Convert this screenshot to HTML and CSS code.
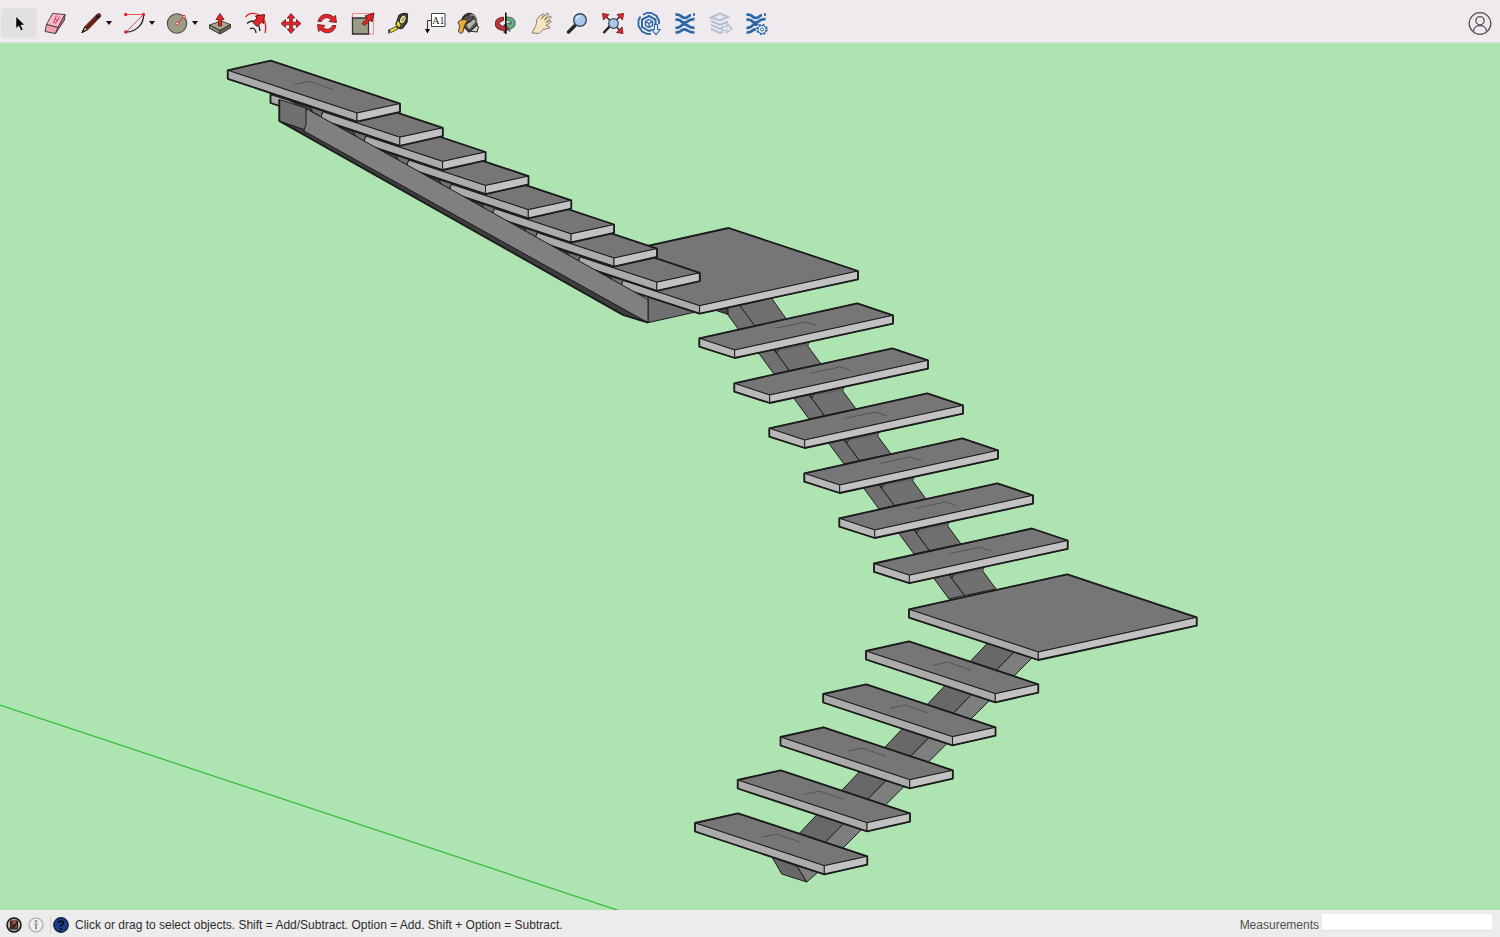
FILE: index.html
```html
<!DOCTYPE html>
<html lang="en">
<head>
  <meta charset="UTF-8">
  <meta name="viewport" content="width=device-width, initial-scale=1.0">
  <title>Stairs</title>
  <link rel="stylesheet" href="styles.css">
</head>
<body>
  <header class="toolbar">
    <button class="tool selected" aria-label="Select">
      <svg class="icon" viewBox="0 0 24 24"><path d="M9 5.500v12l2.800-2.600 2.200 4.800 2-.9-2.100-4.700h3.800z" fill="#000" stroke="#fff" stroke-width=".5"/></svg>
    </button>
    <button class="tool" aria-label="Eraser">
      <svg class="icon" viewBox="0 0 24 24" stroke="#444" stroke-linejoin="round">
        <path d="M9.500 2.500 22 3.500 15 16.500 3.500 13.500z" fill="#ffb5c4"/>
        <path d="M3.500 13.500 15 16.500 12.500 22.500 2 20.500z" fill="#f5a0b2"/>
        <path d="M22 3.500 21.500 9 12.500 22.500 15 16.500z" fill="#cf7186"/>
        <path d="M13.500 4.500 10.500 11.500 13 12 16.500 5.500M12 8.500l3 .8" fill="none" stroke="#a64a63"/>
      </svg>
    </button>
    <button class="tool tool-menu" aria-label="Line">
      <svg class="icon" viewBox="0 0 24 24" stroke="#1b1b1b" stroke-linejoin="round">
        <path d="M3 21.500 6 15.500 18.500 3 Q21 1.500 22 5 L9 18.500z" fill="#a5291f"/>
        <path d="M7.500 17 20 4.500" stroke="#4b1411" stroke-width="1.500"/>
        <path d="M3 21.500 5.700 16 8.500 18.500z" fill="#d8b486"/>
        <path d="M3 21.500 4.300 19 5.500 20z" fill="#000"/>
        <path d="M17 4.500 20.500 7" stroke-width="2"/>
      </svg>
      <span class="caret"></span>
    </button>
    <button class="tool tool-menu" aria-label="Arc">
      <svg class="icon" viewBox="0 0 24 24" fill="none">
        <path d="M21.500 4C22 13 14 21 4 21" stroke="#222" stroke-width="1.300"/>
        <path d="M4 3.500H21.500L4 21" stroke="#e8505a"/>
        <g fill="#e3262b"><circle cx="3.700" cy="3.500" r="1.700"/><circle cx="21.500" cy="3.500" r="1.700"/><circle cx="3.700" cy="21" r="1.700"/></g>
      </svg>
      <span class="caret"></span>
    </button>
    <button class="tool tool-menu" aria-label="Shapes">
      <svg class="icon" viewBox="0 0 24 24">
        <circle cx="12" cy="12.500" r="9.700" fill="#9b9c85" stroke="#4b4b42" stroke-width="1.100"/>
        <path d="M12.300 12.500 19 5.500" stroke="#e3262b"/>
        <g fill="#fff" stroke="#e3262b"><circle cx="12.300" cy="12.500" r="1.500"/><circle cx="19" cy="5.500" r="1.300"/></g>
      </svg>
      <span class="caret"></span>
    </button>

    <div class="tool-group">
      <button class="tool" aria-label="Push/Pull">
        <svg class="icon" viewBox="0 0 24 24" stroke="#30322a" stroke-width=".9" stroke-linejoin="round">
          <path d="M1.500 14 13 10 22.500 13.500 12 19.500z" fill="#a6a78c"/>
          <path d="M1.500 14 12 19.500V23L1.500 17.500z" fill="#868870"/>
          <path d="M22.500 13.500V17L12 23V19.500z" fill="#63654f"/>
          <path d="M10.500 15V8.500H8L12 2.500 16 8.500H13.500V15z" fill="#e3262b" stroke="#7e1515"/>
        </svg>
      </button>
      <button class="tool" aria-label="Offset">
        <svg class="icon" viewBox="0 0 24 24" fill="none">
          <path d="M1.500 6C5 1.500 12 1 17 5.500 22 10 22.500 16 21 22" stroke="#e3262b" stroke-width="1.400"/>
          <path d="M3 12.500c4-4 9-3 11.500 1.500 1 2 1.500 4 1 6M6 18c3-2 6 0 6 4" stroke="#222" stroke-width="1.300"/>
          <path d="M9 11.500 13 7 11.500 5 20.500 3.500 19.500 12.500 17.500 11 13 15.500z" fill="#e3262b" stroke="#6f1111" stroke-linejoin="round"/>
        </svg>
      </button>
      <button class="tool" aria-label="Move">
        <svg class="icon" viewBox="0 0 24 24"><path d="M12 2.500 15.800 7H13.300V11.200H17.500V8.500L22 12.500 17.500 16.500V13.800H13.300V18H15.800L12 22.500 8.200 18H10.700V13.800H6.500V16.500L2 12.500 6.500 8.500V11.200H10.700V7H8.200z" fill="#e3262b" stroke="#6b1515" stroke-width=".8" stroke-linejoin="round"/></svg>
      </button>
      <button class="tool" aria-label="Rotate">
        <svg class="icon" viewBox="0 0 24 24" fill="#e3262b" stroke="#6b1515" stroke-width=".8" stroke-linejoin="round">
          <path id="turn" d="M3 10.500C4.500 3 13 1 18.500 6L20.500 4.500 21.500 11.500 14 10.500 16 8.500C12.500 5.500 8 6.500 6.500 10.500z"/>
          <use href="#turn" transform="rotate(180 12 12.500)"/>
        </svg>
      </button>
      <button class="tool" aria-label="Scale">
        <svg class="icon" viewBox="0 0 24 24">
          <path d="M1.500 2.500H22.500V23H1.500z" fill="none" stroke="#ef8c8c"/>
          <path d="M1.500 7H17.500V23H1.500z" fill="#9b9c85" stroke="#333" stroke-width="1.300"/>
          <path d="M11 12.500 16.500 7.200 14 5 23 2 21 11 19 9 13.500 14.500z" fill="#e3262b" stroke="#5d1111" stroke-width=".9" stroke-linejoin="round"/>
        </svg>
      </button>
      <button class="tool" aria-label="Tape Measure">
        <svg class="icon" viewBox="0 0 24 24" stroke="#222" stroke-linejoin="round">
          <path d="M2 19 9 15.500 11 18 4 21.500z" fill="#f5dd38" stroke-width=".8"/>
          <path d="M2 18.500v4" stroke-width="1.500"/>
          <path d="M9 13 12 4.500Q16 1.500 20.500 3L20 11 15.500 17Q11 19 9 13z" fill="#55564b" stroke-width="1.300"/>
          <path d="M9 14 10.500 9 14 13 12.500 17z" fill="#e5cf30" stroke-width=".6"/>
          <ellipse cx="15.800" cy="8.500" rx="3" ry="4.500" transform="rotate(24 15.800 8.500)" fill="#f0e87a"/>
          <ellipse cx="16" cy="8.500" rx="1.400" ry="2.800" transform="rotate(24 16 8.500)" fill="#a5a5a0" stroke="none"/>
        </svg>
      </button>
      <button class="tool" aria-label="Text">
        <svg class="icon" viewBox="0 0 24 24">
          <path d="M9.500 2.500H23V15.500H9.500z" fill="#fff" stroke="#444"/>
          <path d="M9 9.500H5.500V19" fill="none" stroke="#333"/>
          <path d="M3 18H8L5.500 22.500z"/>
          <text class="icon-label" x="16.300" y="12.500">A1</text>
        </svg>
      </button>
      <button class="tool" aria-label="Paint Bucket">
        <svg class="icon" viewBox="2 0 24 24" stroke="#222" stroke-linejoin="round">
          <path d="M9 15 18 10 22.500 16 21 21 13 20z" fill="#d6d5c8"/>
          <path d="M6 8Q9 2 15 2.500 20 4 20.500 9L21 14 13 21 8 16z" fill="#686a60" stroke-width="1.200"/>
          <path d="M14 9q5-3 6 2l-7 8-3-5z" fill="#b6b7ab" stroke-width=".7"/>
          <ellipse cx="11.500" cy="8" rx="6" ry="3.600" transform="rotate(-25 11.500 8)" fill="#51534c"/>
          <path d="M2 11Q6 7 12 9.500Q8 13 7 21Q4 24 2.500 20 5 15 2 11z" fill="#efaa35" stroke-width=".8"/>
          <path d="M14 4Q22 3 21 12" fill="none" stroke="#ddd" stroke-width=".8"/>
        </svg>
      </button>
      <button class="tool" aria-label="Orbit">
        <svg class="icon" viewBox="1 0 24 24" stroke-linejoin="round">
          <path d="M13 6Q20.500 6 22 10V14Q21 17 17 18V20.500L13 17V13.500L17 11V13.500Q19 12.500 18.500 11 17 9 13 9z" fill="#63b184" stroke="#244c35" stroke-width=".8"/>
          <path d="M10.500 6Q3 7 2.500 11V15Q4 19 11 19.500V22L16 17.500 11 13.500V15.500Q7 15 6.500 12.500 7 10 10.500 9.500z" fill="#bd343b" stroke="#571619" stroke-width=".8"/>
          <path d="M12.800 1.500V23" stroke="#111" stroke-width="1.600"/>
        </svg>
      </button>
      <button class="tool" aria-label="Pan">
        <svg class="icon" viewBox="0 0 24 24"><path d="M2 22 6 14 7 8Q10 4 13 3 15 2.500 14 4.500L11 8 17 2.500Q19 2 18 4L14.500 9 20 5Q22 5 20.500 7L16 11.500 20.500 9.500Q22 10 20.500 11.500L16 14.500 20 16Q20 17.500 18 17.500L13 18.500 9 22.500z" fill="#f7e4c0" stroke="#6d6249" stroke-width=".8" stroke-linejoin="round"/></svg>
      </button>
      <button class="tool" aria-label="Zoom">
        <svg class="icon" viewBox="0 0 24 24">
          <path d="M3.500 21 10 14.500" stroke="#292929" stroke-width="3.500" stroke-linecap="round"/>
          <circle cx="15" cy="9" r="6.300" fill="#a9c9ec" stroke="#3a4856" stroke-width="1.400"/>
          <path d="M11 8Q12 5 15 4.800" fill="none" stroke="#e6f2ff" stroke-width="1.300"/>
        </svg>
      </button>
      <button class="tool" aria-label="Zoom Extents">
        <svg class="icon" viewBox="0 0 24 24">
          <path d="M4 4.500 20 20.500M20 4.500 10 14" stroke="#222" stroke-width="1.400"/>
          <path d="M2.500 22 9 15" stroke="#222" stroke-width="2.500"/>
          <path d="M1.500 2.500 8 3.500 2.500 9zM22.500 2.500 16 3.500 21.500 9zM22 22.500 15.500 21.500 21 16z" fill="#e3262b" stroke="#641313" stroke-width=".8" stroke-linejoin="round"/>
          <circle cx="12.500" cy="12.500" r="4.800" fill="#a9c9ec" stroke="#3a4856" stroke-width="1.200"/>
        </svg>
      </button>
      <button class="tool" aria-label="3D Warehouse">
        <svg class="icon blue" viewBox="0 0 24 24">
          <path d="M6 3.800 10 1.800H14L19.500 5 22 9.500V13M3.500 5.500 1.500 9V15L5 20.500 10 22.800H14" stroke-width="1.800"/>
          <path d="M14.500 19 12 20 5 16V8.500L12 5 18.500 8.500V13" stroke-width="2"/>
          <path d="M12 8.500 15.500 10.500V14.500L12 16.500 8.500 14.500V10.500zM8.500 10.500 12 12.500 15.500 10.500M12 12.500V16.500" stroke-width="1.300"/>
          <path d="M17.500 13.500H20.500V18.500H23L19 23.500 15 18.500H17.500z" stroke-width="1.200" fill="#fff"/>
        </svg>
      </button>
      <button class="tool" aria-label="Extension Warehouse">
        <svg class="icon blue" viewBox="0 0 24 24"><path id="waves" d="M2.500 3.700Q6.500 3.300 8.500 5.500T14 6.500Q16 4.500 18 4M2.500 8.700Q6.500 8.300 8.500 10.500T14.500 10.500Q17.500 8 21.500 8.200M2.500 16.800Q6.500 17 8.500 14.500T14.500 14.500Q17.500 17 21.500 16.800M2.500 21.500Q6.500 21.700 8.500 19.500T14.500 19.500Q17.500 21.700 21.500 21.500M20 3.500H22" stroke-width="2.700"/></svg>
      </button>
      <button class="tool" aria-label="Send to LayOut" disabled>
        <svg class="icon pale" viewBox="0 0 24 24">
          <path d="M3 6.500 12 2.500 20 6 12 9.500zM3 10 12 14 20 10.500M3 14 12 18 15 16.500M3 18 12 22 15 20.500" stroke-width="2"/>
          <path d="M14.500 15.500H19V12.500L24 17.500 19 22V19.500H14.500z" fill="#e5e8ee" stroke-width="1.200"/>
        </svg>
      </button>
      <button class="tool" aria-label="Extension Manager">
        <svg class="icon blue" viewBox="0 0 24 24">
          <use href="#waves"/>
          <circle cx="18" cy="18.500" r="6" fill="#eeeaee" stroke="none"/>
          <circle cx="18" cy="18.500" r="4.700" stroke-dasharray="2 1.690" stroke-width="2"/>
          <circle cx="18" cy="18.500" r="4" fill="#fff"/>
          <circle cx="18" cy="18.500" r="1.600"/>
        </svg>
      </button>
    </div>

    <button class="tool account" aria-label="Account">
      <svg class="icon" viewBox="0 0 24 24" fill="none" stroke="#57545b" stroke-width="1.300">
        <circle cx="12" cy="12.500" r="10.800"/><circle cx="12" cy="9.700" r="4.100"/><path d="M5.500 20.500C5.500 12.500 18.500 12.500 18.500 20.500"/>
      </svg>
    </button>
  </header>

  <main class="viewport">
    <svg class="scene" viewBox="0 43 1500 867" preserveAspectRatio="xMidYMid slice" role="img" aria-label="Stair model">
      <defs>
        <!-- tread running left to right, used by top and bottom flights -->
        <g id="tread">
          <path class="top" d="M695 823 738 813.300 867.300 856.300 824.300 865.700z"/>
          <path class="side" d="M695 823V831.500L824.300 874.300V865.700z"/>
          <path class="front" d="M824.300 865.700V874.300L867.300 864.700V856.300z"/>
          <path class="outline" d="M695 823 738 813.300 867.300 856.300V864.700L824.300 874.300 695 831.500z"/>
        </g>
        <g id="tread-b">
          <path class="top" d="M699.300 338.300 857.300 303.300 893 315.300 734.700 350z"/>
          <path class="end" d="M699.300 338.300V346.700L734.700 358V350z"/>
          <path class="front" d="M734.700 350V358L893 323.700V315.300z"/>
          <path class="outline" d="M699.300 338.300 857.300 303.300 893 315.300V323.700L734.700 358 699.300 346.700z"/>
          <path class="hint" d="M775 328.300 805 322 816.700 325.700"/>
        </g>
        <path id="hint" class="hint" d="M761.700 837.300 776.700 834 800.700 842.300"/>
        <g id="landing">
          <path class="top" d="M909 609.300 1067.300 574.300 1196.700 617.300 1038.300 652z"/>
          <path class="side" d="M909 609.300V617.700L1038.300 660V652z"/>
          <path class="front" d="M1038.300 652V660L1196.700 625.700V617.300z"/>
          <path class="outline" d="M909 609.300 1067.300 574.300 1196.700 617.300V625.700L1038.300 660 909 617.700z"/>
        </g>
        <g id="beam-low">
          <path class="beam-dark" d="M991.400 639 970 661.700 996 670.500 1018 648z"/>
          <path class="beam-light" d="M1018 648 996 670.500 1014 676 1036 654z"/>
        </g>
        <g id="beam-mid">
          <path class="beam" d="M752 344 774 374 789.500 370.500 775 351 770 344z"/>
          <path class="beam" d="M775 351 789.500 370.500 821 364 807.700 346 810 338 771 345z"/>
          <path class="notch" d="M778 346 810 340 807.700 345.500 779 351z"/>
          <path class="beam" d="M775 349 776.500 353.500 779 349"/>
        </g>
        <g id="bracket">
          <path class="gap" d="M333 125 366 135.300 364 141z"/>
          <path class="beam" d="M353 131.300 366 135.300 364 141 356 136.500z"/>
        </g>
      </defs>

      <path class="axis" d="M-10 701.700 630 914.300"/>

      <!-- bottom flight -->
      <path class="beam-dark" d="M772 857 781.700 874 806.700 882 797 866z"/>
      <path class="beam-light" d="M797 866 806.700 882 817 873 825 865z"/>
      <use href="#beam-low" x="-171" y="172"/>
      <use href="#beam-low" x="-128.500" y="129"/>
      <use href="#beam-low" x="-85.500" y="86"/>
      <use href="#beam-low" x="-43" y="43"/>
      <use href="#beam-low"/>
      <use href="#tread"/><use href="#hint"/>
      <use href="#tread" x="42.700" y="-43"/><use href="#hint" x="42.700" y="-43"/>
      <use href="#tread" x="85.500" y="-86"/><use href="#hint" x="85.500" y="-86"/>
      <use href="#tread" x="128.200" y="-129"/><use href="#hint" x="128.200" y="-129"/>
      <use href="#tread" x="171" y="-172"/><use href="#hint" x="171" y="-172"/>

      <!-- middle flight -->
      <path class="gap" d="M715 310 728 314.500V307z"/>
      <path class="beam" d="M728 303V315L739 330 755 326 740 303z"/>
      <path class="beam" d="M738 303 755 326 787 320 770 296z"/>
      <use href="#beam-mid"/>
      <use href="#beam-mid" x="35" y="45"/>
      <use href="#beam-mid" x="70" y="90"/>
      <use href="#beam-mid" x="105" y="135"/>
      <use href="#beam-mid" x="140" y="180"/>
      <use href="#beam-mid" x="175" y="225"/>
      <use href="#tread-b"/>
      <use href="#tread-b" x="35" y="45"/>
      <use href="#tread-b" x="70" y="90"/>
      <use href="#tread-b" x="105" y="135"/>
      <use href="#tread-b" x="140" y="180"/>
      <use href="#tread-b" x="174.700" y="225.200"/>
      <use href="#landing"/>

      <!-- top flight, lowest tread first so the upper ones overlap it -->
      <path class="beam" d="M648 295V322.700L700 311V295z"/>
      <use href="#landing" x="-338.700" y="-346.300"/>
      <use href="#tread" x="-167.500" y="-583.500"/>
      <use href="#tread" x="-210.300" y="-607.700"/>
      <use href="#tread" x="-253.200" y="-631.800"/>
      <use href="#tread" x="-296" y="-656"/>
      <use href="#tread" x="-338.800" y="-680.200"/>
      <use href="#tread" x="-381.700" y="-704.300"/>
      <use href="#tread" x="-424.500" y="-728.500"/>
      <use href="#bracket" x="-43" y="-24.200"/>
      <use href="#bracket"/>
      <use href="#bracket" x="42.800" y="24.200"/>
      <use href="#bracket" x="85.600" y="48.300"/>
      <use href="#bracket" x="128.500" y="72.500"/>
      <use href="#bracket" x="171.300" y="96.700"/>
      <use href="#bracket" x="214.200" y="120.800"/>
      <use href="#bracket" x="257" y="145"/>
      <path class="under" d="M279.300 121 304 129 648 322.700 623 315z"/>
      <path class="stringer" d="M306 108.500 648 299.500V322.700L304 131z"/>
      <path class="beam" d="M279.300 99.500V121L304 129.500 306 125V108z"/>
      <path class="outline" d="M279.300 99.500V121L623 315 648 322.700"/>
      <use href="#tread" x="-467.300" y="-752.700"/>
      <use href="#hint" x="-467.300" y="-752.700"/>
    </svg>
  </main>

  <footer class="statusbar">
    <button class="status-icon" aria-label="Geo-location">
      <svg viewBox="0 0 16 16"><circle cx="8" cy="8" r="7" fill="#b9aaa0" stroke="#111" stroke-width="1.500"/><path d="M4.500 4H11.500V12H4.500z" fill="#8b4a3d" stroke="#222"/><path d="M5 5 8 11 11 5M4 12 12 4" fill="none" stroke="#26211f" stroke-width="1.200"/><path d="M7 4.500H10L8.500 8z" fill="#d8522e"/></svg>
    </button>
    <button class="status-icon" aria-label="Credits">
      <svg viewBox="0 0 16 16"><circle cx="8" cy="8" r="7" fill="#efefef" stroke="#a5a5a5" stroke-width="1.100"/><circle cx="8" cy="4.300" r="1.400" fill="#999"/><path d="M5.800 6.500H10.200V7.500H9V12.500H7V7.500H5.800z" fill="#999"/></svg>
    </button>
    <span class="divider"></span>
    <button class="status-icon" aria-label="Help">
      <svg viewBox="0 0 16 16"><circle cx="8" cy="8" r="7.300" fill="#1c3d86" stroke="#111a30" stroke-width="1.200"/><path d="M5.700 6Q5.800 4 8 4T10.300 6Q10.300 7 9 7.800T8 9.700" fill="none" stroke="#050b1d" stroke-width="1.700"/><circle cx="8" cy="12" r="1.100" fill="#050b1d"/></svg>
    </button>
    <p class="hint-text">Click or drag to select objects. Shift = Add/Subtract. Option = Add. Shift + Option = Subtract.</p>
    <label class="measure-label" for="measurements">Measurements</label>
    <input class="measure-input" type="text" id="measurements">
  </footer>
</body>
</html>
```
FILE: styles.css
```css
body {
  margin: 0;
  height: 100vh;
  display: flex;
  flex-direction: column;
  overflow: hidden;
  font-family: "Liberation Sans", Arial, sans-serif;
  font-size: 12px;
  background: #ececec;
  color: #2c2c2c;
}
button {
  padding: 0;
  border: 0;
  background: none;
}

/* toolbar */
.toolbar {
  display: flex;
  align-items: center;
  height: 43px;
  padding: 4px 2px 0 1px;
  box-sizing: border-box;
  background: #eeeaee;
  border-bottom: 1px solid #d5dfd6;
  flex: none;
}
.tool {
  display: flex;
  align-items: center;
  justify-content: center;
  width: 36px;
  height: 30px;
  border-radius: 4px;
}
.tool.selected {
  background: #e3e0e3;
}
.icon {
  width: 24px;
  height: 24px;
  flex: none;
  overflow: visible;
}
.tool-menu {
  width: 43px;
  justify-content: flex-start;
  padding-left: 6px;
  box-sizing: border-box;
  gap: 3px;
}
.caret {
  border: 3px solid transparent;
  border-top: 4px solid #111;
  border-bottom: 0;
}
.tool-group {
  display: flex;
  width: 572px;
}
.tool-group .tool {
  flex: 1;
}
.account {
  margin-left: auto;
}
.blue {
  fill: none;
  stroke: #2d65a6;
}
.pale {
  fill: none;
  stroke: #b4bfcf;
}
.icon-label {
  font-family: "Liberation Serif", serif;
  font-size: 10px;
  text-anchor: middle;
  fill: #222;
}

/* model */
.viewport {
  flex: 1;
  min-height: 0;
  background: #aee4b1;
}
.scene {
  display: block;
  width: 100%;
  height: 100%;
}
.scene path {
  stroke: #1c1c1c;
  stroke-width: 1;
  stroke-linejoin: round;
}
.scene .top { fill: #767676; }
.scene .side { fill: #ababab; }
.scene .end { fill: #b8b8b8; }
.scene .front { fill: #c2c2c2; }
.scene .beam { fill: #707070; }
.scene .beam-dark { fill: #686868; }
.scene .beam-light { fill: #7e7e7e; }
.scene .stringer { fill: #808080; }
.scene .under { fill: #3d3d3d; }
.scene .gap { fill: #484848; }
.scene .notch {
  fill: #656565;
  stroke: none;
}
.scene .outline {
  fill: none;
  stroke-width: 1.8;
}
.scene .hint {
  fill: none;
  stroke: #4b4b4b;
  stroke-width: 0.8;
}
.scene .axis {
  stroke: #2dbb36;
  stroke-width: 1.2;
}

/* status bar */
.statusbar {
  display: flex;
  align-items: center;
  height: 27px;
  padding: 2px 8px 0 6px;
  box-sizing: border-box;
  flex: none;
}
.status-icon {
  width: 16px;
  height: 16px;
  margin-right: 6px;
}
.status-icon svg {
  display: block;
}
.divider {
  width: 1px;
  height: 18px;
  margin-right: 2px;
  background: #d6d6d6;
}
.hint-text {
  flex: 1;
  margin: 0;
  white-space: nowrap;
}
.measure-label {
  margin-right: 3px;
  color: #505050;
}
.measure-input {
  width: 170px;
  height: 17px;
  margin-bottom: 5px;
  padding: 0 4px;
  box-sizing: border-box;
  border: 0;
  border-bottom: 1px solid #dedede;
  background: #fff;
}
```
